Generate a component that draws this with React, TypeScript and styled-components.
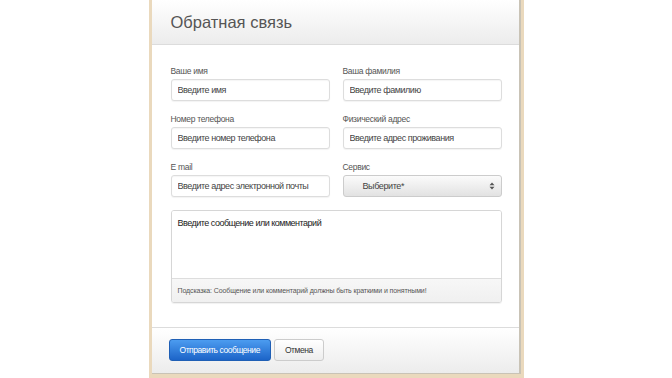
import { createGlobalStyle } from "styled-components";
import styled from "styled-components";

const GlobalStyle = createGlobalStyle`
  html, body {
    margin: 0;
    padding: 0;
    background: #ffffff;
    font-family: "Liberation Sans", Arial, sans-serif;
  }
`;

const Page = styled.div`
  display: flex;
  justify-content: center;
  height: 378px;
  overflow: hidden;
`;

const Frame = styled.div`
  width: 369px;
  padding: 0 3px 4px 3px;
  background: #ead9bd;
  display: flex;
`;

const Panel = styled.div`
  flex: 1;
  display: flex;
  flex-direction: column;
  background: #ffffff;
  border-right: 2px solid #c9c3b6;
  border-bottom: 1px solid #c9c3b6;
`;

const Header = styled.header`
  height: 44px;
  display: flex;
  align-items: center;
  padding-left: 19px;
  border-bottom: 1px solid #dcdcdc;
  background: linear-gradient(#ffffff, #ececec);
`;

const Title = styled.h3`
  margin: 0;
  font-size: 16.5px;
  font-weight: 400;
  color: #555555;
`;

const Body = styled.div`
  padding: 20px 17px 24px 19px;
  border-bottom: 1px solid #dcdcdc;
`;

const Grid = styled.div`
  display: grid;
  grid-template-columns: 1fr 1fr;
  column-gap: 13px;
  row-gap: 12px;
`;

const Field = styled.div`
  display: flex;
  flex-direction: column;
  gap: 2px;
`;

const Label = styled.label`
  font-size: 8.5px;
  line-height: 12px;
  letter-spacing: -0.3px;
  color: #555555;
`;

const Input = styled.input`
  box-sizing: border-box;
  height: 22px;
  padding: 0 6px;
  border: 1px solid #dddddd;
  border-radius: 3px;
  box-shadow: inset 0 1px 1px rgba(0, 0, 0, 0.04), 0 1px 1px rgba(0, 0, 0, 0.05);
  font-family: inherit;
  font-size: 9px;
  letter-spacing: -0.45px;
  color: #333333;
  outline: none;

  &::placeholder {
    color: #444444;
  }
`;

const Select = styled.div`
  box-sizing: border-box;
  height: 22px;
  display: flex;
  align-items: center;
  justify-content: space-between;
  padding: 0 6px 0 19px;
  border: 1px solid #cccccc;
  border-radius: 3px;
  background: linear-gradient(#fbfbfb, #e2e2e2);
  font-size: 9px;
  letter-spacing: -0.4px;
  color: #444444;
`;

const Message = styled.div`
  margin-top: 13px;
  border: 1px solid #d6d6d6;
  border-radius: 3px;
  overflow: hidden;
  box-shadow: 0 1px 1px rgba(0, 0, 0, 0.06);
`;

const TextArea = styled.textarea`
  display: block;
  box-sizing: border-box;
  width: 100%;
  height: 67px;
  resize: none;
  border: none;
  padding: 7px 6px;
  font-family: inherit;
  font-size: 9px;
  letter-spacing: -0.5px;
  color: #222222;
  outline: none;

  &::placeholder {
    color: #222222;
  }
`;

const Hint = styled.div`
  height: 23px;
  display: flex;
  align-items: center;
  padding-left: 6px;
  border-top: 1px solid #dddddd;
  background: linear-gradient(#f7f7f7, #f0f0f0);
  font-size: 7px;
  letter-spacing: -0.12px;
  color: #555555;
`;

const Footer = styled.footer`
  flex: 1;
  display: flex;
  align-items: flex-start;
  gap: 3px;
  padding: 11px 17px 0;
  background: linear-gradient(#ffffff, #ececec);
`;

const Button = styled.button<{ $primary?: boolean }>`
  box-sizing: border-box;
  height: 22px;
  padding: 0 10px;
  border-radius: 3px;
  font-family: inherit;
  font-size: 8.5px;
  letter-spacing: -0.45px;
  cursor: pointer;
  border: 1px solid ${(p) => (p.$primary ? "#1f5fb5" : "#cccccc")};
  color: ${(p) => (p.$primary ? "#ffffff" : "#333333")};
  background: ${(p) =>
    p.$primary
      ? "linear-gradient(#4c9cf0, #1c64c8)"
      : "linear-gradient(#ffffff, #ededed)"};
`;

const Arrows = () => (
  <svg width="6" height="8" viewBox="0 0 6 8">
    <path d="M3 0.5 L5.5 3.3 H0.5 Z M3 7.5 L5.5 4.7 H0.5 Z" fill="#555555" />
  </svg>
);

export default function App() {
  return (
    <Page>
      <GlobalStyle />
      <Frame>
        <Panel>
          <Header>
            <Title>Обратная связь</Title>
          </Header>
          <Body>
            <Grid>
              <Field>
                <Label>Ваше имя</Label>
                <Input placeholder="Введите имя" />
              </Field>
              <Field>
                <Label>Ваша фамилия</Label>
                <Input placeholder="Введите фамилию" />
              </Field>
              <Field>
                <Label>Номер телефона</Label>
                <Input placeholder="Введите номер телефона" />
              </Field>
              <Field>
                <Label>Физический адрес</Label>
                <Input placeholder="Введите адрес проживания" />
              </Field>
              <Field>
                <Label>E mail</Label>
                <Input placeholder="Введите адрес электронной почты" />
              </Field>
              <Field>
                <Label>Сервис</Label>
                <Select>
                  <span>Выберите*</span>
                  <Arrows />
                </Select>
              </Field>
            </Grid>
            <Message>
              <TextArea placeholder="Введите сообщение или комментарий" />
              <Hint>
                Подсказка: Сообщение или комментарий должны быть краткими и
                понятными!
              </Hint>
            </Message>
          </Body>
          <Footer>
            <Button $primary>Отправить сообщение</Button>
            <Button>Отмена</Button>
          </Footer>
        </Panel>
      </Frame>
    </Page>
  );
}
